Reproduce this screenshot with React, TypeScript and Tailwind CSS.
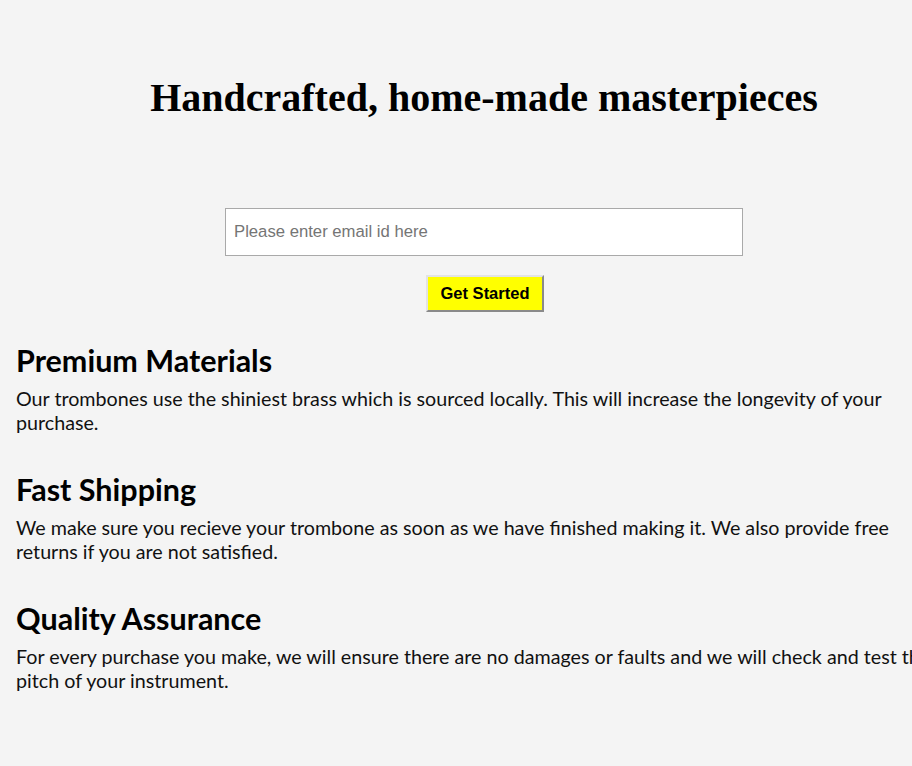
const sections = [
  {
    title: "Premium Materials",
    body: "Our trombones use the shiniest brass which is sourced locally. This will increase the longevity of your purchase.",
  },
  {
    title: "Fast Shipping",
    body: "We make sure you recieve your trombone as soon as we have finished making it. We also provide free returns if you are not satisfied.",
  },
  {
    title: "Quality Assurance",
    body: "For every purchase you make, we will ensure there are no damages or faults and we will check and test the pitch of your instrument.",
  },
];

export default function App() {
  return (
    <div className="min-h-screen w-full overflow-hidden bg-[#f4f4f4]">
      <div className="w-[968px] pb-16">
        {/* Hero */}
        <h1 className="pt-[75px] text-center font-['Liberation_Serif',serif] text-[40px] font-bold leading-[46px] text-black">
          Handcrafted, home-made masterpieces
        </h1>

        <form className="mt-[87px] flex flex-col items-center">
          <input
            type="email"
            placeholder="Please enter email id here"
            className="h-[48px] w-[518px] border border-[#a9a9a9] bg-white px-2 font-['Liberation_Sans',sans-serif] text-[16.7px] text-black outline-none placeholder:text-[#757575]"
          />
          <button
            type="button"
            className="ml-[2px] mt-[19px] h-[37px] w-[118px] border-2 border-t-[#e3e3e3] border-l-[#e3e3e3] border-r-[#8a8a8a] border-b-[#8a8a8a] bg-[#ffff00] font-['Liberation_Sans',sans-serif] text-[16.5px] font-bold text-black"
          >
            Get Started
          </button>
        </form>

        {/* Features */}
        <div className="mt-[28px] flex flex-col gap-[34px] px-4 font-['Lato',sans-serif] text-black">
          {sections.map((s) => (
            <section key={s.title}>
              <h2 className="text-[30.5px] font-bold leading-[40px]">{s.title}</h2>
              <p className="mt-[7px] max-w-[930px] text-[19.7px] leading-[24px] text-[#111]">{s.body}</p>
            </section>
          ))}
        </div>
      </div>
    </div>
  );
}
